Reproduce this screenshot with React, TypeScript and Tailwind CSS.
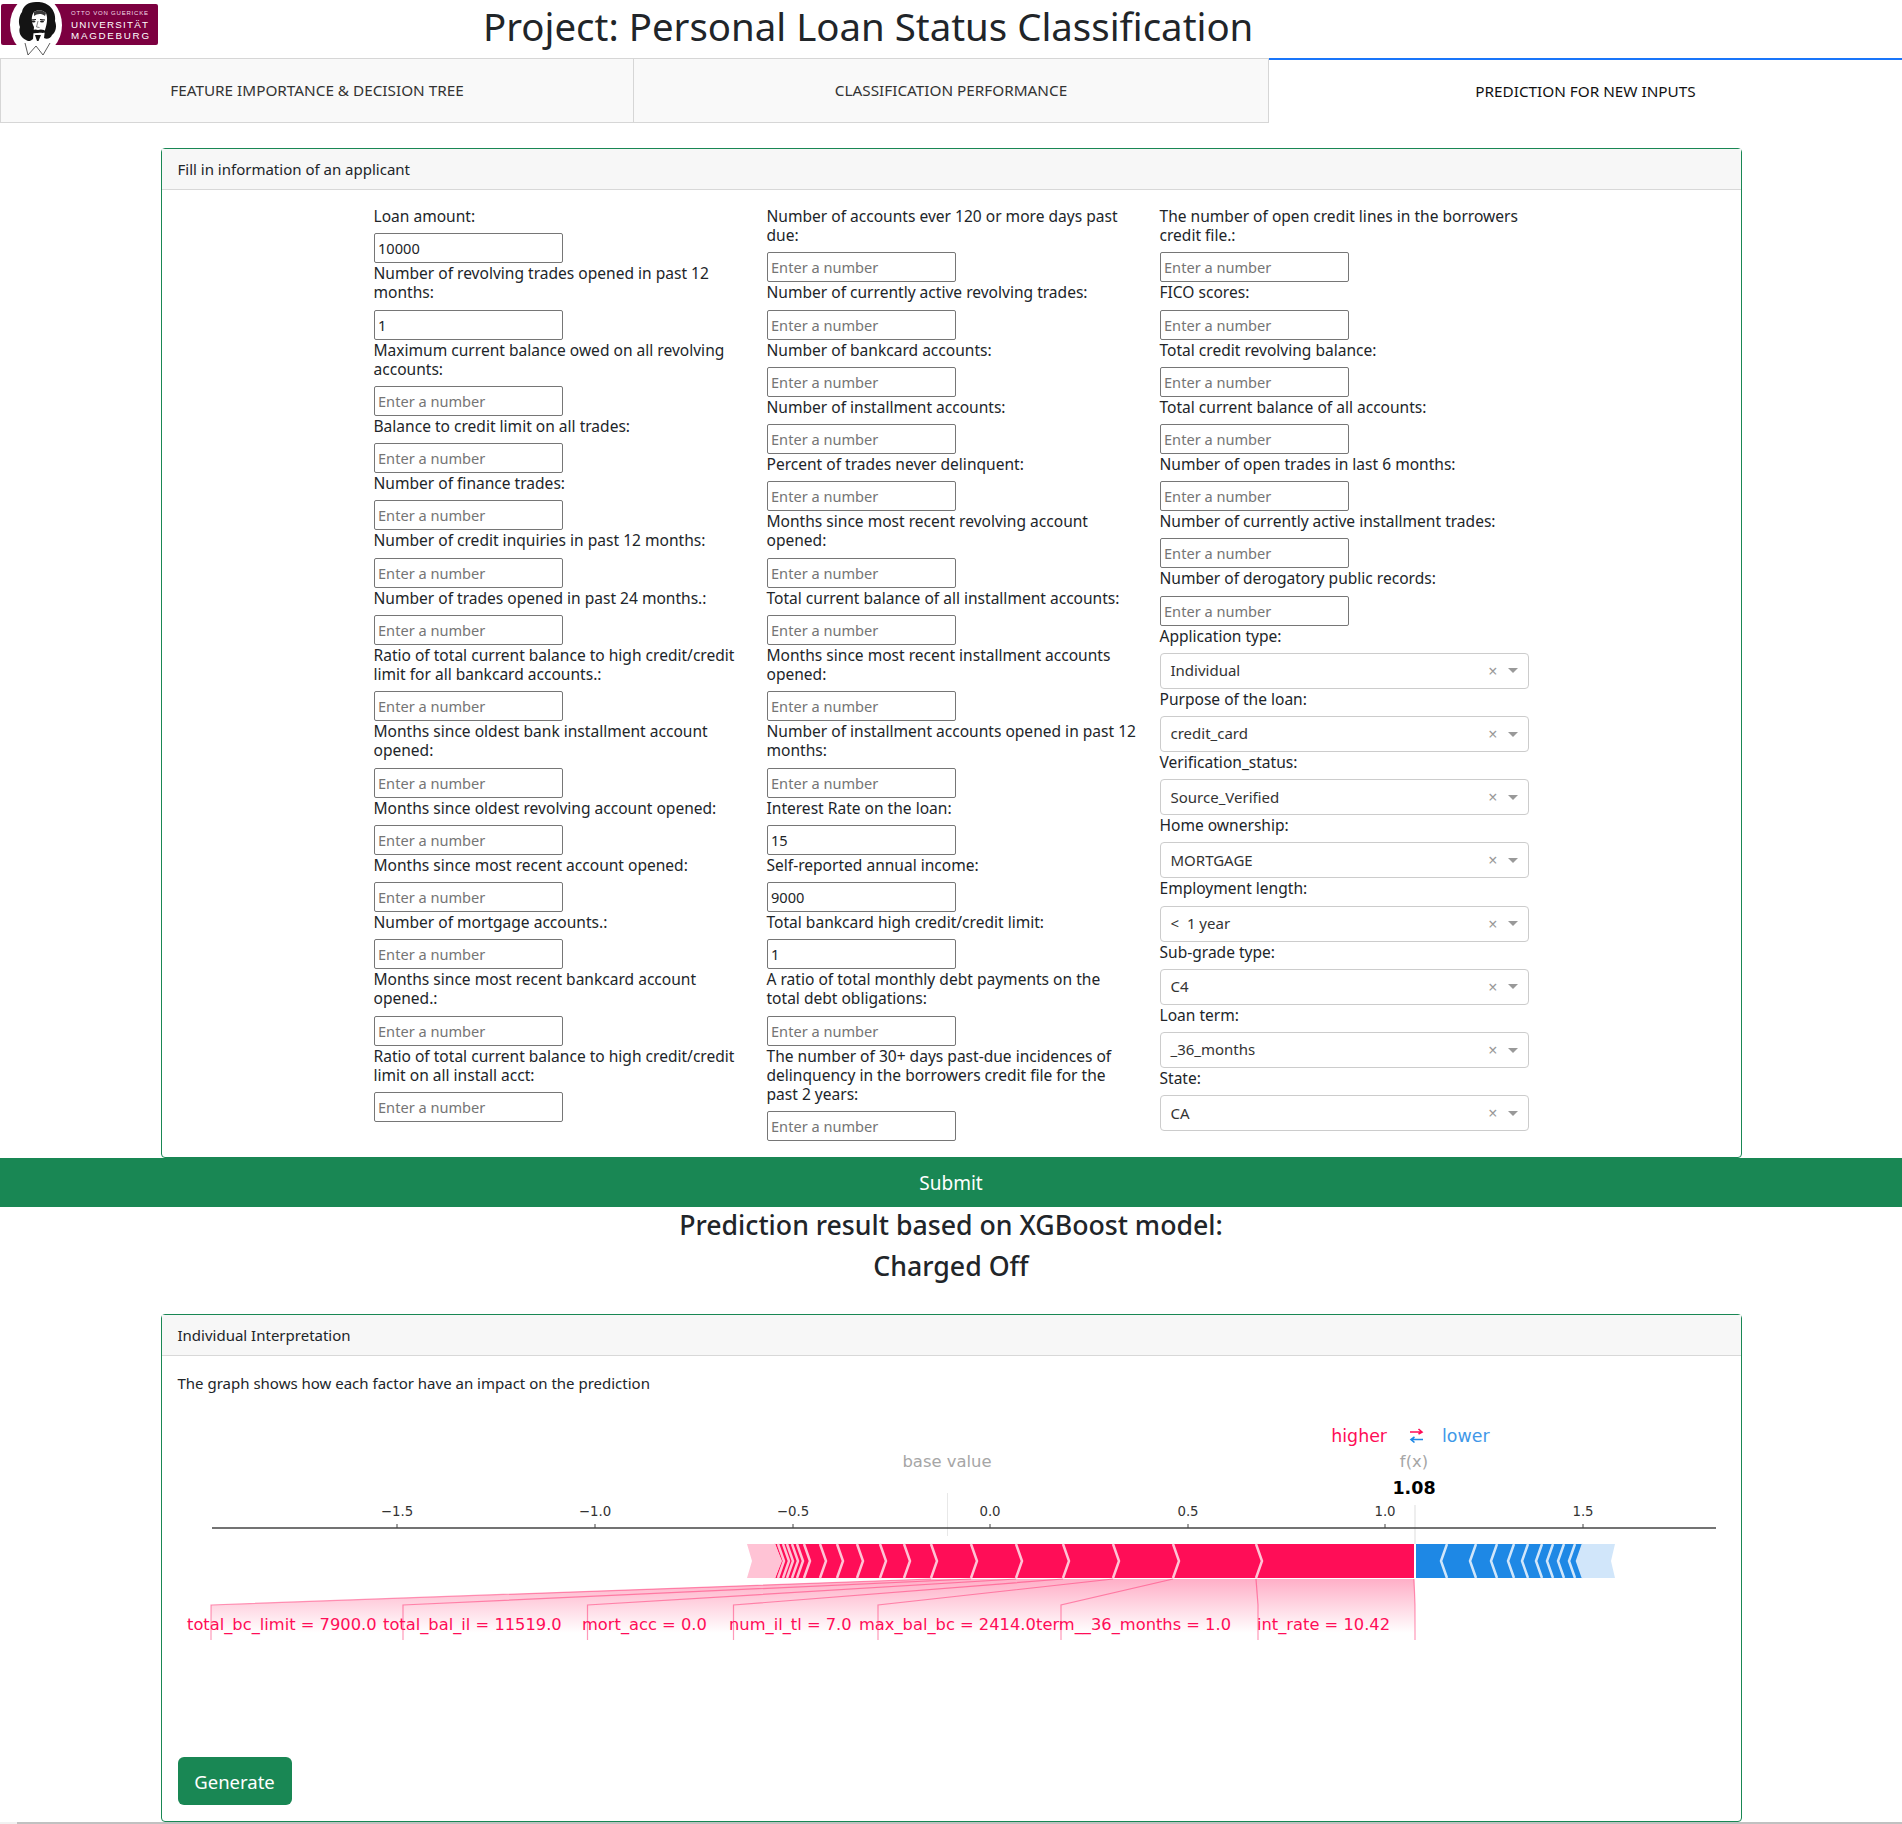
const col1: [string, string?][] = [
  ["Loan amount:", "10000"],
  ["Number of revolving trades opened in past 12\nmonths:", "1"],
  ["Maximum current balance owed on all revolving\naccounts:"],
  ["Balance to credit limit on all trades:"],
  ["Number of finance trades:"],
  ["Number of credit inquiries in past 12 months:"],
  ["Number of trades opened in past 24 months.:"],
  ["Ratio of total current balance to high credit/credit\nlimit for all bankcard accounts.:"],
  ["Months since oldest bank installment account\nopened:"],
  ["Months since oldest revolving account opened:"],
  ["Months since most recent account opened:"],
  ["Number of mortgage accounts.:"],
  ["Months since most recent bankcard account\nopened.:"],
  ["Ratio of total current balance to high credit/credit\nlimit on all install acct:"],
];
const col2: [string, string?][] = [
  ["Number of accounts ever 120 or more days past\ndue:"],
  ["Number of currently active revolving trades:"],
  ["Number of bankcard accounts:"],
  ["Number of installment accounts:"],
  ["Percent of trades never delinquent:"],
  ["Months since most recent revolving account\nopened:"],
  ["Total current balance of all installment accounts:"],
  ["Months since most recent installment accounts\nopened:"],
  ["Number of installment accounts opened in past 12\nmonths:"],
  ["Interest Rate on the loan:", "15"],
  ["Self-reported annual income:", "9000"],
  ["Total bankcard high credit/credit limit:", "1"],
  ["A ratio of total monthly debt payments on the\ntotal debt obligations:"],
  ["The number of 30+ days past-due incidences of\ndelinquency in the borrowers credit file for the\npast 2 years:"],
];
const col3: [string, string?][] = [
  ["The number of open credit lines in the borrowers\ncredit file.:"],
  ["FICO scores:"],
  ["Total credit revolving balance:"],
  ["Total current balance of all accounts:"],
  ["Number of open trades in last 6 months:"],
  ["Number of currently active installment trades:"],
  ["Number of derogatory public records:"],
];
const selects = [
  ["Application type:", "Individual"],
  ["Purpose of the loan:", "credit_card"],
  ["Verification_status:", "Source_Verified"],
  ["Home ownership:", "MORTGAGE"],
  ["Employment length:", "<  1 year"],
  ["Sub-grade type:", "C4"],
  ["Loan term:", "_36_months"],
  ["State:", "CA"],
];

function Field({ label, value }: { label: string; value?: string }) {
  return (
    <div>
      <label className="mb-[7px] block whitespace-pre pt-px text-[15.55px]">{label}</label>
      <input
        type="text"
        defaultValue={value}
        placeholder="Enter a number"
        className="block h-[30px] w-[189px] rounded-[2px] border border-[#767676] bg-white px-[3.5px] text-[14.6px] text-[#212529] placeholder:text-[#757575]"
      />
    </div>
  );
}

function SelectField({ label, value }: { label: string; value: string }) {
  return (
    <div>
      <label className="mb-[7px] block pt-px text-[15.55px]">{label}</label>
      <div className="flex h-9 w-[369px] items-center rounded border border-[#cccccc] bg-white pl-[10px] pr-[10px] text-[15px] text-[#333333]">
        <span className="flex-1 whitespace-pre">{value}</span>
        <span className="mr-[10px] text-[16px] leading-none text-[#999999]">×</span>
        <span className="h-0 w-0 border-x-[5px] border-t-[5px] border-x-transparent border-t-[#999999]" />
      </div>
    </div>
  );
}

function Logo() {
  const sans = "'Liberation Sans', sans-serif";
  return (
    <svg width="160" height="58" viewBox="0 0 160 58" className="shrink-0">
      <rect x="1" y="4" width="157" height="41" rx="2" fill="#7c0040" />
      <ellipse cx="36" cy="25" rx="26" ry="30" fill="#ffffff" />
      <path d="M25 43 L28 55 L36 46 L43 55 L50 43" fill="#ffffff" stroke="#333333" strokeWidth="0.8" strokeLinejoin="round" />
      <path d="M36 2 C28 2 23 6 22 12 C19 16 18 22 20 27 C18 32 21 38 26 40 C28 42 31 41 33 39 L34 27 C31 22 31 16 34 12 C38 9 43 10 46 13 C48 18 47 24 45 30 L44 38 C47 40 51 38 52 35 C56 32 57 26 55 21 C56 15 53 8 48 5 C45 2.5 40 2 36 2 Z" fill="#141414" />
      <path d="M34 12 C38 9 43 10 46 13 L45 16 C41 13 37 14 34 16 Z" fill="#3a3a3a" />
      <path d="M30.5 20 L36 19.5 M40 19.5 L45 20" stroke="#1a1a1a" strokeWidth="1.2" fill="none" />
      <ellipse cx="33.5" cy="21.5" rx="2" ry="0.9" fill="#222222" />
      <ellipse cx="42" cy="21.5" rx="2" ry="0.9" fill="#222222" />
      <path d="M38 21 L36.5 27 L39.5 27.5" fill="none" stroke="#666666" strokeWidth="0.8" />
      <path d="M29 33 C32 29 36 29 38 30 C40 29 44 29 47 32 C44 33.5 41 32.5 38 33 C35 32.5 32 34 29 33 Z" fill="#141414" />
      <path d="M35 35 L41 35 L38.5 41 L37 41 Z" fill="#141414" />
      <text x="71" y="14.5" fontFamily={sans} fontSize="6" textLength="77" lengthAdjust="spacing" fill="#f3dfe9">OTTO VON GUERICKE</text>
      <text x="71" y="28" fontFamily={sans} fontSize="9.8" textLength="77" lengthAdjust="spacing" fill="#ffffff">UNIVERSITÄT</text>
      <text x="71" y="39" fontFamily={sans} fontSize="9.8" textLength="78" lengthAdjust="spacing" fill="#ffffff">MAGDEBURG</text>
    </svg>
  );
}

const pinkTops = [774, 778, 783, 787, 792, 797, 804, 820, 837, 857, 880, 904, 931, 971, 1016, 1063, 1113, 1173, 1256];
const blueTops = [1447, 1476, 1497, 1514, 1528, 1542, 1553, 1564, 1575, 1583];
const connectors: [number, number][] = [
  [1414, 1415],
  [1256, 1258],
  [1173, 1061],
  [1113, 878],
  [1063, 733.5],
  [1016, 587.5],
  [971, 403],
  [931, 211],
];
const ticks: [number, string][] = [
  [397, "−1.5"],
  [595, "−1.0"],
  [793, "−0.5"],
  [990, "0.0"],
  [1188, "0.5"],
  [1385, "1.0"],
  [1583, "1.5"],
];
const featureLabels: [number, string][] = [
  [187, "total_bc_limit = 7900.0"],
  [383, "total_bal_il = 11519.0"],
  [582, "mort_acc = 0.0"],
  [729, "num_il_tl = 7.0"],
  [859, "max_bal_bc = 2414.0"],
  [1036, "term__36_months = 1.0"],
  [1257, "int_rate = 10.42"],
];

function ForceChart() {
  const dejavu = "'DejaVu Sans', sans-serif";
  return (
    <svg width="1549" height="340" viewBox="178 1400 1549 340" className="mt-[8px] block" fontFamily={dejavu}>
      <defs>
        <linearGradient id="fade" gradientUnits="userSpaceOnUse" x1="0" y1="1577" x2="0" y2="1632">
          <stop offset="0" stopColor="#ff0d57" stopOpacity="0.34" />
          <stop offset="1" stopColor="#ff0d57" stopOpacity="0" />
        </linearGradient>
      </defs>

      <text x="1387" y="1441" textAnchor="end" fontSize="17.4" fill="#ff0d57">higher</text>
      <text x="1442" y="1441" fontSize="17.4" fill="#3f98e8">lower</text>
      <path d="M1410 1431 H1422 M1418.5 1428 L1422 1431 L1418.5 1433" fill="none" stroke="#ff0d57" strokeWidth="1.6" />
      <path d="M1423 1438.5 H1411 M1414.5 1436 L1411 1438.5 L1414.5 1441.5" fill="none" stroke="#1e88e5" strokeWidth="1.6" />

      <text x="947" y="1466" textAnchor="middle" fontSize="16.4" fill="#a6a6a6">base value</text>
      <text x="1414" y="1466" textAnchor="middle" fontSize="16.4" fill="#a6a6a6">f(x)</text>
      <text x="1414" y="1493" textAnchor="middle" fontSize="17.5" fontWeight="700" fill="#000000">1.08</text>

      <line x1="947.5" y1="1492" x2="947.5" y2="1535" stroke="#e8e8e8" strokeWidth="1" />
      <line x1="1415" y1="1504" x2="1415" y2="1543" stroke="#e8e8e8" strokeWidth="1.5" />

      <line x1="212" y1="1527" x2="1716" y2="1527" stroke="#444444" strokeWidth="1.5" />
      {ticks.map(([x, t]) => (
        <g key={t}>
          <line x1={x} y1="1523" x2={x} y2="1527" stroke="#444444" strokeWidth="1" />
          <text x={x} y="1515" textAnchor="middle" fontSize="13.3" fill="#333333">{t}</text>
        </g>
      ))}

      <path d="M747 1543 L775 1543 L782 1560 L775 1577 L747 1577 L752 1560 Z" fill="#ffc3d5" />
      <path d="M775 1543 L1414 1543 L1414 1577 L775 1577 L782 1560 Z" fill="#ff0d57" />
      {pinkTops.map((x) => (
        <path key={x} d={`M${x} 1543 L${x + 6} 1560 L${x} 1577`} fill="none" stroke="#ffc3d5" strokeWidth="2.5" />
      ))}

      <path d="M1416 1543 L1583 1543 L1577 1560 L1583 1577 L1416 1577 Z" fill="#1e88e5" />
      <path d="M1583 1543 L1615 1543 L1611 1560 L1615 1577 L1583 1577 L1577 1560 Z" fill="#d1e6fa" />
      {blueTops.map((x) => (
        <path key={x} d={`M${x} 1543 L${x - 6} 1560 L${x} 1577`} fill="none" stroke="#d1e6fa" strokeWidth="2.5" />
      ))}

      {connectors.slice(0, -1).map(([b, l], i) => {
        const [b2, l2] = connectors[i + 1];
        return (
          <path
            key={b}
            d={`M${b} 1578 L${l} 1604 L${l} 1639 L${l2} 1639 L${l2} 1604 L${b2} 1578 Z`}
            fill="url(#fade)"
          />
        );
      })}
      {connectors.map(([b, l]) => (
        <path key={b} d={`M${b} 1578 L${l} 1604 L${l} 1639`} fill="none" stroke="#ff0d57" strokeOpacity="0.42" strokeWidth="1.2" />
      ))}
      {featureLabels.map(([x, t]) => (
        <text key={t} x={x} y="1629" fontSize="16.3" fill="#ff0d57">{t}</text>
      ))}
    </svg>
  );
}

export default function App() {
  return (
    <div className="w-[1902px] bg-white font-['Noto_Sans',sans-serif] text-[15px] leading-[19.2px] text-[#212529]">
      <header className="flex h-[58px]">
        <Logo />
        <h1 className="ml-[323px] whitespace-nowrap text-[38.4px] font-normal leading-[53px]">
          Project: Personal Loan Status Classification
        </h1>
      </header>

      <nav className="grid h-[65px] grid-cols-[634px_635px_1fr] text-[15.3px]">
        <div className="flex items-center justify-center border border-[#d6d6d6] bg-[#f9f9f9] text-[#333333]">
          FEATURE IMPORTANCE &amp; DECISION TREE
        </div>
        <div className="flex items-center justify-center border-y border-r border-[#d6d6d6] bg-[#f9f9f9] text-[#333333]">
          CLASSIFICATION PERFORMANCE
        </div>
        <div className="flex items-center justify-center border-t-2 border-[#1975fa] bg-white text-[#111111]">
          PREDICTION FOR NEW INPUTS
        </div>
      </nav>

      <section className="mx-auto mt-[25px] w-[1581px] rounded border border-[#198754]">
        <div className="h-[41px] border-b border-[#d8d8d8] bg-[#f7f7f7] px-4 leading-[41px]">
          Fill in information of an applicant
        </div>
        <div className="p-4">
          <div className="mx-auto grid w-[1155px] grid-cols-3 gap-x-6">
            <div>
              {col1.map(([l, v]) => (
                <Field key={l} label={l} value={v} />
              ))}
            </div>
            <div>
              {col2.map(([l, v]) => (
                <Field key={l} label={l} value={v} />
              ))}
            </div>
            <div>
              {col3.map(([l, v]) => (
                <Field key={l} label={l} value={v} />
              ))}
              {selects.map(([l, v]) => (
                <SelectField key={l} label={l} value={v} />
              ))}
            </div>
          </div>
        </div>
      </section>

      <button className="block h-[49px] w-full bg-[#198754] pt-[2px] text-center text-[19px] text-white">Submit</button>

      <div className="flex h-[107px] flex-col text-center text-[26.7px] font-medium leading-[40.5px] text-[#212529]">
        <div className="-mt-[2px]">Prediction result based on XGBoost model:</div>
        <div>Charged Off</div>
      </div>

      <section className="mx-auto w-[1581px] rounded border border-[#198754]">
        <div className="h-[41px] border-b border-[#d8d8d8] bg-[#f7f7f7] px-4 leading-[41px]">
          Individual Interpretation
        </div>
        <div className="p-4">
          <p className="mt-[2px]">The graph shows how each factor have an impact on the prediction</p>
          <ForceChart />
          <button className="mt-4 block h-12 w-[114px] rounded-md bg-[#198754] text-[18.5px] text-white">Generate</button>
        </div>
      </section>

      <div className="flex h-[3px]">
        <div className="w-[17px] bg-[#f1f1f1]" />
        <div className="flex-1 bg-[#c1c1c1]" />
      </div>
    </div>
  );
}
